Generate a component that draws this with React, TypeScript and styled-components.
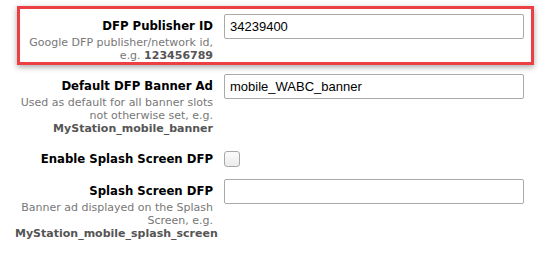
import React from "react";
import styled, { createGlobalStyle } from "styled-components";

const Global = createGlobalStyle`
  html, body { margin: 0; padding: 0; background: #fff; }
  body { font-family: "DejaVu Sans", Verdana, sans-serif; }
`;

const Form = styled.div`
  width: 543px;
  padding: 14px 0 0 15px;
  box-sizing: border-box;
  display: flex;
  flex-direction: column;
  gap: 12px;
`;

const Row = styled.div<{ $highlight?: boolean }>`
  position: relative;
  display: flex;
  align-items: flex-start;
  gap: 11px;
  ${(p) =>
    p.$highlight &&
    `
    &::after {
      content: "";
      position: absolute;
      left: 2px;
      top: -8px;
      width: 517px;
      height: 59px;
      box-sizing: border-box;
      border: 3px solid #ec3f44;
      box-shadow: 0 2px 6px rgba(0, 0, 0, 0.35);
      pointer-events: none;
    }
  `}
`;

const LabelCell = styled.div`
  width: 198px;
  flex: none;
  text-align: right;
  padding-top: 4px;
`;

const Label = styled.div`
  font-family: "DejaVu Sans Condensed", "DejaVu Sans", Verdana, sans-serif;
  font-stretch: condensed;
  font-size: 13px;
  font-weight: bold;
  color: #000;
  line-height: 16px;
`;

const Desc = styled.div`
  margin-top: 2px;
  font-size: 11px;
  line-height: 13px;
  color: #777;
  b {
    color: #555;
  }
`;

const TextInput = styled.input`
  width: 300px;
  height: 25px;
  box-sizing: border-box;
  border: 1px solid #aaa;
  border-radius: 2px;
  padding: 0 5px;
  font-family: "Liberation Sans", Arial, sans-serif;
  font-size: 13px;
  color: #000;
  outline: none;
`;

const Check = styled.span`
  display: block;
  margin-top: 4px;
  width: 16px;
  height: 16px;
  box-sizing: border-box;
  border: 1px solid #a8a8a8;
  border-radius: 3px;
  background: linear-gradient(#fbfbfb, #ececec);
`;

export default function App() {
  return (
    <>
      <Global />
      <Form>
        <Row $highlight>
          <LabelCell>
            <Label>DFP Publisher ID</Label>
            <Desc>
              Google DFP publisher/network id, e.g. <b>123456789</b>
            </Desc>
          </LabelCell>
          <TextInput defaultValue="34239400" />
        </Row>
        <Row>
          <LabelCell>
            <Label>Default DFP Banner Ad</Label>
            <Desc>
              Used as default for all banner slots not otherwise set, e.g.{" "}
              <b>MyStation_mobile_banner</b>
            </Desc>
          </LabelCell>
          <TextInput defaultValue="mobile_WABC_banner" />
        </Row>
        <Row>
          <LabelCell>
            <Label>Enable Splash Screen DFP</Label>
          </LabelCell>
          <Check />
        </Row>
        <Row>
          <LabelCell>
            <Label>Splash Screen DFP</Label>
            <Desc>
              Banner ad displayed on the Splash Screen, e.g.{" "}
              <b>MyStation_mobile_splash_screen</b>
            </Desc>
          </LabelCell>
          <TextInput defaultValue="" />
        </Row>
      </Form>
    </>
  );
}
